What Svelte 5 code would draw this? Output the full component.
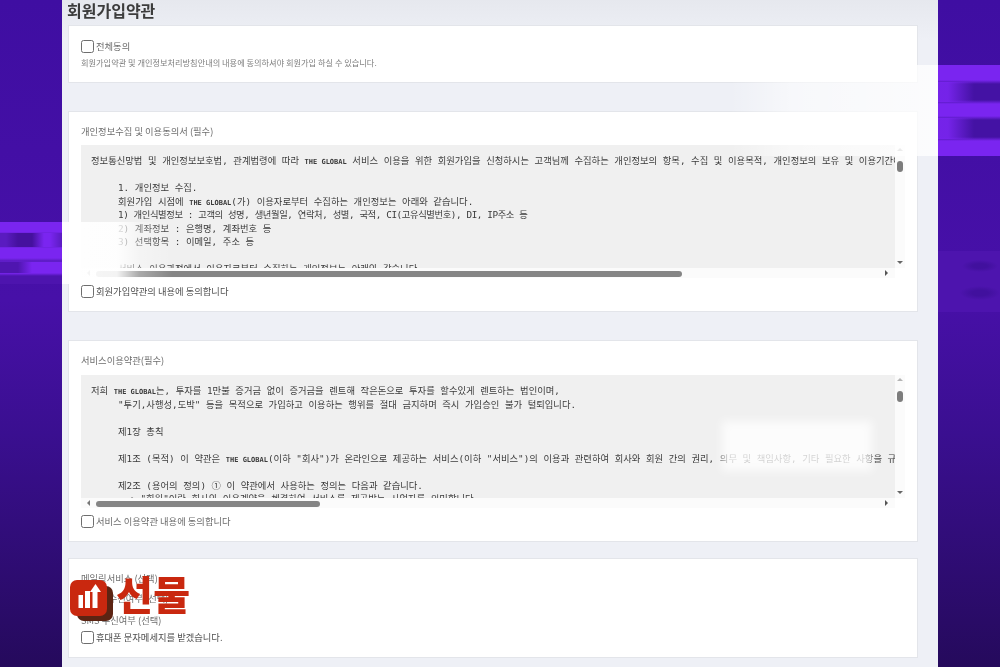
<script>
  const privacy = [
    { t: '정보통신망법 및 개인정보보호법, 관계법령에 따라 |THE GLOBAL| 서비스 이용을 위한 회원가입을 신청하시는 고객님께 수집하는 개인정보의 항목, 수집 및 이용목적, 개인정보의 보유 및 이용기간에 대해 안내드립니다.' },
    { t: '' },
    { t: '1. 개인정보 수집.', i: 1 },
    { t: '회원가입 시점에 |THE GLOBAL|(가) 이용자로부터 수집하는 개인정보는 아래와 같습니다.', i: 1 },
    { t: '1) 개인식별정보 : 고객의 성명, 생년월일, 연락처, 성별, 국적, CI(고유식별번호), DI, IP주소 등', i: 1, tight: 1 },
    { t: '2) 계좌정보 : 은행명, 계좌번호 등', i: 1 },
    { t: '3) 선택항목 : 이메일, 주소 등', i: 1 },
    { t: '' },
    { t: '서비스 이용과정에서 이용자로부터 수집하는 개인정보는 아래와 같습니다.', i: 1 }
  ];
  const terms = [
    { t: '저희 |THE GLOBAL|는, 투자를 1만불 증거금 없이 증거금을 렌트해 작은돈으로 투자를 할수있게 렌트하는 법인이며,' },
    { t: '"투기,사행성,도박" 등을 목적으로 가입하고 이용하는 행위를 절대 금지하며 즉시 가입승인 불가 털퇴입니다.', i: 1 },
    { t: '' },
    { t: '제1장 총칙', i: 1 },
    { t: '' },
    { t: '제1조 (목적) 이 약관은 |THE GLOBAL|(이하 "회사")가 온라인으로 제공하는 서비스(이하 "서비스")의 이용과 관련하여 회사와 회원 간의 권리, 의무 및 책임사항, 기타 필요한 사항을 규정함을 목적으로 합니다.', i: 1 },
    { t: '' },
    { t: '제2조 (용어의 정의) ① 이 약관에서 사용하는 정의는 다음과 같습니다.', i: 1 },
    { t: '  • "회원"이란 회사와 이용계약을 체결하여 서비스를 제공받는 사업자를 의미합니다.', i: 1 }
  ];
  const parts = (s) => s.split('|');
</script>

{#snippet lines(rows)}
  {#each rows as row}
    <div class="line" class:indent={row.i} class:tight={row.tight}>
      {#each parts(row.t) as p, k}
        {#if k % 2}<span class="brand">{p}</span>{:else}{p}{/if}
      {/each}
    </div>
  {/each}
{/snippet}

{#snippet box(rows, thumbW)}
  <div class="scrollbox">
    <div class="text">{@render lines(rows)}</div>
    <div class="vbar">
      <i class="up"></i>
      <b class="vthumb"></b>
      <i class="down"></i>
    </div>
    <div class="hbar">
      <i class="left"></i>
      <b class="hthumb" style="width:{thumbW}px"></b>
      <i class="right"></i>
    </div>
  </div>
{/snippet}

<div class="page">
  <aside class="side"></aside>
  <main class="main">
    <h1>회원가입약관</h1>

    <section class="card first">
      <label class="check"><input type="checkbox" /><span>전체동의</span></label>
      <p class="hint">회원가입약관 및 개인정보처리방침안내의 내용에 동의하셔야 회원가입 하실 수 있습니다.</p>
    </section>

    <section class="card second">
      <div class="label">개인정보수집 및 이용동의서 (필수)</div>
      {@render box(privacy, 586)}
      <label class="check agree"><input type="checkbox" /><span class="dark">회원가입약관의 내용에 동의합니다</span></label>
    </section>

    <section class="card third">
      <div class="label">서비스이용약관(필수)</div>
      {@render box(terms, 224)}
      <label class="check agree"><input type="checkbox" /><span>서비스 이용약관 내용에 동의합니다</span></label>
    </section>

    <section class="card fourth">
      <div class="label">메일링서비스 (선택)</div>
      <div class="label mid">이메일 수신여부 (선택)</div>
      <div class="label low">SMS 수신여부 (선택)</div>
      <label class="check"><input type="checkbox" /><span class="dark">휴대폰 문자메세지를 받겠습니다.</span></label>
    </section>
  </main>
  <aside class="side"></aside>

  <div class="glitch gl-left"></div>
  <div class="smear sm-left"></div>
  <div class="glitch gl-right1"></div>
  <div class="smear sm-right"></div>
  <div class="glitch gl-right2"></div>
  <div class="smear sm-inner"></div>

  <div class="logo">
    <div class="mark">
      <svg viewBox="0 0 44 42" width="44" height="42" aria-hidden="true">
        <rect x="7" y="6" width="36" height="35" rx="7" fill="#5c2413" />
        <rect x="0" y="0" width="37" height="36" rx="7" fill="#c9280f" />
        <rect x="8.5" y="15" width="4.5" height="13" fill="#fff" />
        <rect x="15" y="11" width="5" height="17" fill="#fff" />
        <path d="M22.5 28V12H20L25.5 4l5.5 8H27.5v16z" fill="#fff" />
      </svg>
    </div>
    <span class="word">선물</span>
  </div>
</div>

<style>
  :global(body) { margin: 0; background: #eef0f6; }
  .page {
    position: relative;
    display: flex;
    width: 1000px;
    height: 667px;
    overflow: hidden;
    font-family: "Noto Sans CJK KR", "Noto Sans", sans-serif;
  }
  .side {
    width: 62px;
    flex: none;
    background: linear-gradient(180deg, #3f0ea2 0%, #4710a8 45%, #3a0f90 65%, #250a5c 100%);
  }
  .main {
    width: 876px;
    flex: none;
    box-sizing: border-box;
    padding: 0 20px 0 6px;
    background: linear-gradient(180deg, #e6e8ee 0, #eef0f6 40px);
    filter: blur(0.6px);
  }
  h1 {
    margin: 0 0 0 -1px;
    height: 25px;
    font-size: 16px;
    line-height: 20px;
    font-weight: 700;
    color: #3c3c3c;
  }
  .card {
    box-sizing: border-box;
    padding: 0 12px;
    background: #fff;
    border: 1px solid #e3e5ea;
  }
  .first { height: 58px; margin-bottom: 28px; padding-top: 14px; }
  .second { height: 201px; margin-bottom: 28px; padding-top: 13px; }
  .third { height: 202px; margin-bottom: 16px; padding-top: 13px; }
  .fourth { height: 100px; padding-top: 13px; }
  .label {
    height: 21px;
    font-size: 9.3px;
    line-height: 13px;
    color: #6e6e6e;
  }
  .second .label { height: 20px; }
  .label.mid { height: 22px; margin-top: -1px; }
  .label.low { height: 17px; }
  .check {
    display: flex;
    align-items: center;
    gap: 2px;
    font-size: 9.3px;
    line-height: 13px;
    color: #6b6b6b;
  }
  .check .dark { color: #4e4e4e; }
  .check input {
    appearance: none;
    flex: none;
    width: 13px;
    height: 13px;
    margin: 0;
    box-sizing: border-box;
    border: 1.5px solid #6e6e6e;
    border-radius: 2.5px;
    background: #fff;
  }
  .agree { margin-top: 7px; }
  .hint {
    margin: 3px 0 0;
    font-size: 8.2px;
    line-height: 12px;
    color: #7d7d7d;
  }
  .scrollbox {
    display: grid;
    grid-template-columns: 814px 10px;
    grid-template-rows: 123px 10px;
    width: 824px;
  }
  .text {
    background: #f0f0f0;
    overflow: hidden;
    box-sizing: border-box;
    padding: 9px 0 0 10px;
    color: #3a3a3a;
    font-family: "DejaVu Sans Mono", "Noto Sans CJK KR", monospace;
    font-size: 9.32px;
    line-height: 13.5px;
  }
  .line {
    height: 13.5px;
    white-space: pre;
  }
  .line.indent { padding-left: 27px; }
  .line.tight { letter-spacing: -0.4px; }
  .brand {
    font-size: 7px;
    font-weight: 700;
  }
  .vbar {
    position: relative;
    background: #fbfbfb;
  }
  .vthumb {
    position: absolute;
    left: 2px;
    top: 16px;
    width: 6px;
    height: 11px;
    border-radius: 3px;
    background: #7d7d7d;
  }
  .up, .down, .left, .right {
    position: absolute;
    width: 0;
    height: 0;
    border: 3px solid transparent;
  }
  .up { left: 2px; top: 3px; border-bottom-color: #b5b5b5; border-top-width: 0; }
  .down { left: 2px; bottom: 4px; border-top-color: #666; border-bottom-width: 0; }
  .hbar {
    position: relative;
    grid-column: 1 / 2;
    background: #fbfbfb;
  }
  .left { left: 6px; top: 2px; border-right-color: #777; border-left-width: 0; }
  .right { right: 7px; top: 2px; border-left-color: #555; border-right-width: 0; }
  .hthumb {
    position: absolute;
    left: 15px;
    top: 3px;
    height: 6px;
    border-radius: 3px;
    background: #858585;
  }
  .glitch, .smear { position: absolute; pointer-events: none; }
  .gl-left {
    left: 0;
    top: 222px;
    width: 62px;
    height: 62px;
    background:
      linear-gradient(90deg, #5a1bc0 0 6px, #45119e 18px 32px, #7a25f0 44px 50px, #5a1bc0 62px) 0 11px / 100% 14px no-repeat,
      linear-gradient(90deg, #4f15b0 0 18px, #7a25f0 32px 62px) 0 40px / 100% 11px no-repeat,
      linear-gradient(180deg,
        #7a25f0 0 10px, #4a14a8 13px 23px, #7a25f0 26px 36px,
        #5a1bc0 39px, #7a25f0 42px 51px, #4d14ae 54px 62px);
  }
  .sm-left {
    left: 62px;
    top: 222px;
    width: 110px;
    height: 62px;
    background: linear-gradient(90deg, rgba(255,255,255,.95), rgba(255,255,255,.9) 50%, rgba(255,255,255,.3) 70%, rgba(255,255,255,0));
  }
  .gl-right1 {
    left: 938px;
    top: 65px;
    width: 62px;
    height: 91px;
    background:
      linear-gradient(90deg, rgba(122,37,240,.9) 0 10px, rgba(122,37,240,0) 36px) 0 17px / 100% 20px no-repeat,
      linear-gradient(90deg, rgba(122,37,240,.9) 0 10px, rgba(122,37,240,0) 36px) 0 53px / 100% 21px no-repeat,
      linear-gradient(180deg,
        #7a25f0 0 15px, #4412a4 19px 35px, #7a25f0 39px 51px,
        #4412a4 55px 72px, #7a25f0 76px 91px);
  }
  .sm-right {
    left: 730px;
    top: 65px;
    width: 208px;
    height: 91px;
    background: linear-gradient(90deg, rgba(255,255,255,0), rgba(255,255,255,.55) 30%, rgba(255,255,255,.8));
  }
  .gl-right2 {
    left: 938px;
    top: 251px;
    width: 62px;
    height: 61px;
    background:
      radial-gradient(18px 6px at 42px 15px, #41109e 40%, rgba(65,16,158,0)),
      radial-gradient(20px 7px at 42px 42px, #41109e 40%, rgba(65,16,158,0)),
      #4d14ae;
  }
  .sm-inner {
    left: 722px;
    top: 421px;
    width: 150px;
    height: 50px;
    background: rgba(255,255,255,.78);
    filter: blur(5px);
  }
  .logo {
    position: absolute;
    left: 70px;
    top: 570px;
    display: flex;
    align-items: flex-start;
    gap: 2px;
  }
  .mark { margin-top: 10px; line-height: 0; }
  .word {
    font-size: 40px;
    font-weight: 900;
    line-height: 46px;
    letter-spacing: 0.5px;
    color: #c9280f;
    filter: blur(0.4px);
  }
</style>
